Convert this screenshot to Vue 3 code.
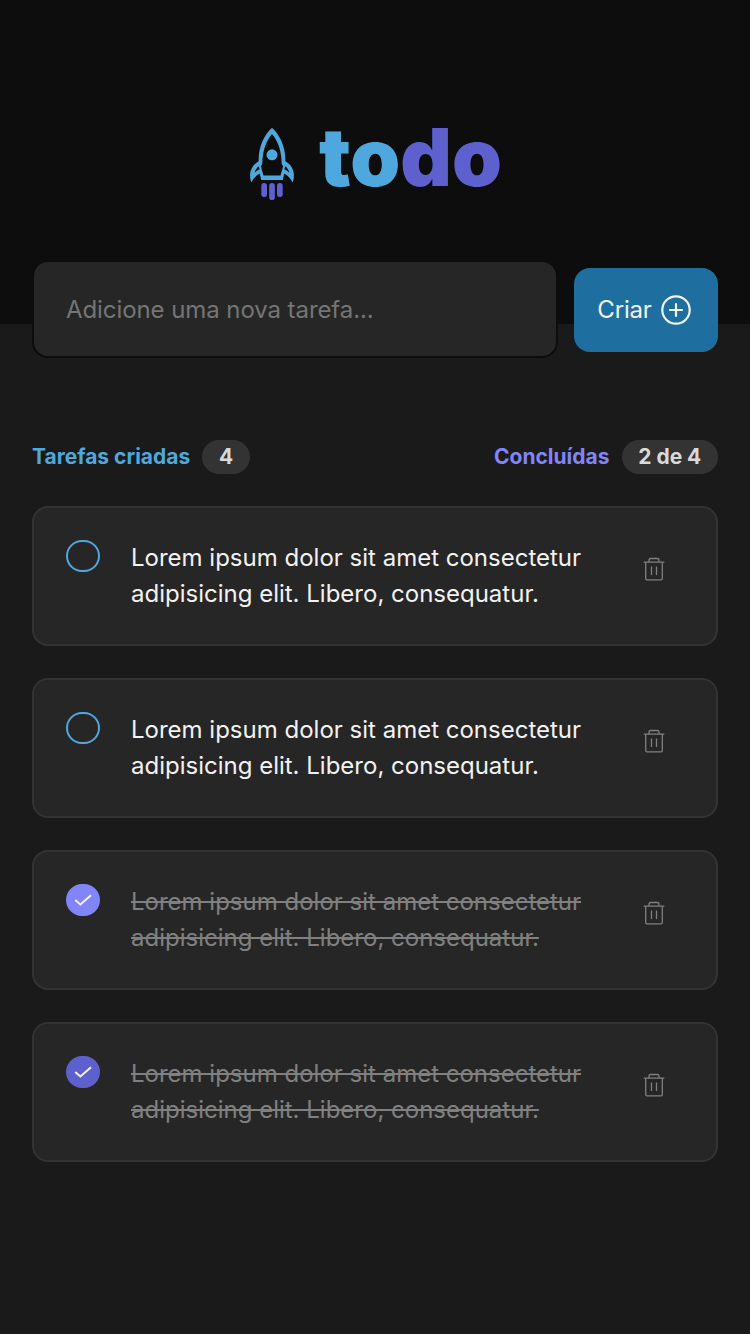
<script setup>
import { ref, computed } from 'vue'

const text = 'Lorem ipsum dolor sit amet consectetur adipisicing elit. Libero, consequatur.'
const tasks = ref([
  { id: 1, text, done: false },
  { id: 2, text, done: false },
  { id: 3, text, done: true, highlighted: true },
  { id: 4, text, done: true },
])
const draft = ref('')
const doneCount = computed(() => tasks.value.filter((t) => t.done).length)
</script>

<template>
  <div class="page">
    <header class="header">
      <div class="logo">
        <svg class="rocket" width="44" height="72" viewBox="0 0 44 72">
          <path
            fill="#4EA8DE"
            fill-rule="evenodd"
            d="M22 -.3C14.500 6.500 8.400 18 8.600 33.200C2 37 -2 44.500 1.200 54.500C3 51 6 47.500 9.700 45.500L11.200 52H32.800L34.300 45.500C38 47.500 41 51 42.800 54.500C46 44.500 42 37 35.400 33.200C35.600 18 29.500 6.500 22 -.3ZM22 6C27.500 12.500 31.600 22 31.700 36.200L33.200 38L30.500 47.600H13.500L10.800 38L12.300 36.200C12.400 22 16.500 12.500 22 6ZM8.700 38.300L9.600 41.200C7.800 42 6 43.300 4.600 44.700C5.200 42.200 6.700 40 8.700 38.300ZM35.300 38.300L34.400 41.200C36.200 42 38 43.300 39.400 44.700C38.800 42.200 37.300 40 35.300 38.300Z"
          />
          <circle cx="22" cy="26.800" r="5.500" fill="#4EA8DE" />
          <g fill="#5E60CE">
            <rect x="11.300" y="55" width="5.700" height="14" rx="2.800" />
            <rect x="19.150" y="55" width="5.700" height="17" rx="2.800" />
            <rect x="27" y="55" width="5.700" height="14" rx="2.800" />
          </g>
        </svg>
        <h1 class="wordmark"><span class="to">to</span><span class="do">do</span></h1>
      </div>
    </header>

    <main class="content">
      <form class="new-task" @submit.prevent>
        <input v-model="draft" class="field" type="text" placeholder="Adicione uma nova tarefa..." />
        <button class="create" type="submit">
          <span class="label">Criar</span>
          <svg width="32" height="32" viewBox="0 0 32 32" fill="none" stroke="currentColor" stroke-width="2.200">
            <circle cx="16" cy="16" r="13.700" />
            <path d="M16 10V22M10 16H22" stroke-linecap="round" />
          </svg>
        </button>
      </form>

      <div class="summary">
        <div class="group created">Tarefas criadas <span class="count">{{ tasks.length }}</span></div>
        <div class="group finished">Concluídas <span class="count">{{ doneCount }} de {{ tasks.length }}</span></div>
      </div>

      <ul class="list">
        <li v-for="task in tasks" :key="task.id" class="task" :class="{ done: task.done }">
          <button class="check" :class="{ highlighted: task.highlighted }" @click="task.done = !task.done">
            <svg v-if="task.done" width="18" height="13" viewBox="0 0 18 13" fill="none">
              <path d="M1.200 6L6.400 10.500L17 1.200" stroke="#F2F2F2" stroke-width="2" />
            </svg>
          </button>
          <p class="text">{{ task.text }}</p>
          <button class="trash">
            <svg width="22" height="24" viewBox="0 0 22 24" fill="none" stroke="#808080" stroke-width="1.300">
              <path d="M.700 5.200H21.300M2.700 5.200V21.500Q2.700 22.900 3.900 22.900H18.100Q19.300 22.900 19.300 21.500V5.200M6 5.200V3Q6 1.500 7.500 1.500H14.500Q16 1.500 16 3V5.200M8.500 9.500V18M13.500 9.500V18" />
            </svg>
          </button>
        </li>
      </ul>
    </main>
  </div>
</template>

<style>
body {
  background: #1a1a1a;
}
</style>

<style scoped>
.page {
  min-height: 1334px;
  background: #1a1a1a;
  font-family: Inter, 'Liberation Sans', sans-serif;
  font-size: 24px;
  color: #f2f2f2;
}
.header {
  box-sizing: border-box;
  height: 324px;
  padding-top: 108px;
  background: #0d0d0d;
}
.logo {
  display: flex;
  justify-content: center;
  gap: 25px;
  padding-left: 2px;
}
.rocket {
  margin-top: 20px;
  overflow: visible;
}
.wordmark {
  margin: 0;
  font-size: 80px;
  line-height: 97px;
  font-weight: 900;
}
.to {
  color: #4ea8de;
}
.do {
  color: #5e60ce;
}
.content {
  margin-top: -64px;
  padding: 0 32px;
}
.new-task {
  display: flex;
  align-items: center;
  gap: 16px;
}
.field {
  box-sizing: border-box;
  flex: 1;
  min-width: 0;
  height: 98px;
  padding: 0 32px;
  border: 2px solid #0d0d0d;
  border-radius: 16px;
  background: #262626;
  color: #f2f2f2;
  font: inherit;
  letter-spacing: -0.08px;
  outline: none;
}
.field::placeholder {
  color: #757575;
}
.create {
  display: flex;
  align-items: center;
  justify-content: center;
  gap: 8px;
  width: 144px;
  height: 84px;
  margin-top: 2px;
  padding: 0 3px 0 0;
  border: 0;
  border-radius: 16px;
  background: #1e6f9f;
  color: #f2f2f2;
  font: inherit;
  letter-spacing: -0.2px;
}
.label {
  padding-bottom: 2px;
}
.summary {
  display: flex;
  justify-content: space-between;
  margin-top: 82px;
  font-size: 21px;
  line-height: 33px;
  font-weight: 700;
}
.group {
  display: flex;
  align-items: flex-start;
  gap: 12px;
}
.created {
  color: #4ea8de;
}
.finished {
  color: #8284fa;
}
.count {
  box-sizing: border-box;
  height: 34px;
  padding: 0 16.7px;
  border-radius: 17px;
  background: #333;
  color: #d9d9d9;
}
.list {
  display: grid;
  gap: 32px;
  margin: 32px 0 0;
  padding: 0;
  list-style: none;
}
.task {
  box-sizing: border-box;
  display: flex;
  align-items: flex-start;
  height: 140px;
  padding: 32px;
  border: 2px solid #333;
  border-radius: 16px;
  background: #262626;
}
.check {
  box-sizing: border-box;
  display: flex;
  align-items: center;
  justify-content: center;
  flex: none;
  width: 34px;
  height: 32px;
  padding: 0;
  border: 2px solid #4ea8de;
  border-radius: 16px;
  background: transparent;
}
.done .check {
  border-color: #5e60ce;
  background: #5e60ce;
}
.done .check.highlighted {
  border-color: #8284fa;
  background: #8284fa;
}
.text {
  width: 480px;
  margin: 0 0 0 31px;
  line-height: 36px;
}
.done .text {
  color: #808080;
  text-decoration: line-through;
}
.trash {
  display: flex;
  margin: 17px 0 0 32px;
  padding: 0;
  border: 0;
  background: transparent;
}
</style>
